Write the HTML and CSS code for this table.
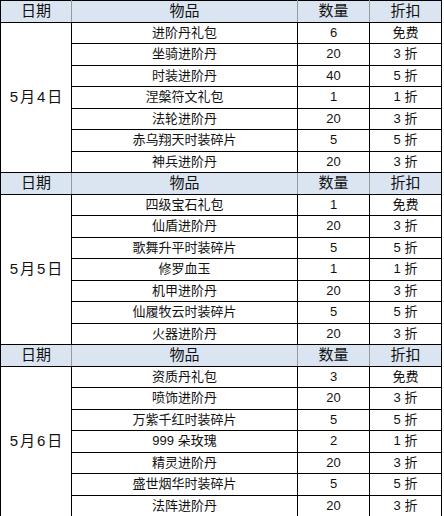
FILE: index.html
```html
<!DOCTYPE html>
<html lang="zh">
<head>
<meta charset="utf-8">
<title>折扣表</title>
<link rel="stylesheet" href="styles.css">
</head>
<body>
<table class="sheet">
  <colgroup>
    <col class="c-date"><col class="c-item"><col class="c-num"><col class="c-off">
  </colgroup>
  <tbody>
    <tr class="head"><th>日期</th><th>物品</th><th>数量</th><th>折扣</th></tr>
    <tr><td class="date" rowspan="7">5月4日</td><td>进阶丹礼包</td><td>6</td><td>免费</td></tr>
    <tr><td>坐骑进阶丹</td><td>20</td><td>3 折</td></tr>
    <tr><td>时装进阶丹</td><td>40</td><td>5 折</td></tr>
    <tr><td>涅槃符文礼包</td><td>1</td><td>1 折</td></tr>
    <tr><td>法轮进阶丹</td><td>20</td><td>3 折</td></tr>
    <tr><td>赤乌翔天时装碎片</td><td>5</td><td>5 折</td></tr>
    <tr><td>神兵进阶丹</td><td>20</td><td>3 折</td></tr>

    <tr class="head"><th>日期</th><th>物品</th><th>数量</th><th>折扣</th></tr>
    <tr><td class="date" rowspan="7">5月5日</td><td>四级宝石礼包</td><td>1</td><td>免费</td></tr>
    <tr><td>仙盾进阶丹</td><td>20</td><td>3 折</td></tr>
    <tr><td>歌舞升平时装碎片</td><td>5</td><td>5 折</td></tr>
    <tr><td>修罗血玉</td><td>1</td><td>1 折</td></tr>
    <tr><td>机甲进阶丹</td><td>20</td><td>3 折</td></tr>
    <tr><td>仙履牧云时装碎片</td><td>5</td><td>5 折</td></tr>
    <tr><td>火器进阶丹</td><td>20</td><td>3 折</td></tr>

    <tr class="head"><th>日期</th><th>物品</th><th>数量</th><th>折扣</th></tr>
    <tr><td class="date" rowspan="7">5月6日</td><td>资质丹礼包</td><td>3</td><td>免费</td></tr>
    <tr><td>喷饰进阶丹</td><td>20</td><td>3 折</td></tr>
    <tr><td>万紫千红时装碎片</td><td>5</td><td>5 折</td></tr>
    <tr><td>999 朵玫瑰</td><td>2</td><td>1 折</td></tr>
    <tr><td>精灵进阶丹</td><td>20</td><td>3 折</td></tr>
    <tr><td>盛世烟华时装碎片</td><td>5</td><td>5 折</td></tr>
    <tr><td>法阵进阶丹</td><td>20</td><td>3 折</td></tr>
  </tbody>
</table>
</body>
</html>
```

FILE: styles.css
```css
html, body {
  margin: 0;
  padding: 0;
  background: #ffffff;
}

.sheet {
  border-collapse: collapse;
  table-layout: fixed;
  width: 442px;
  font-family: "Liberation Sans", "Noto Sans CJK SC", sans-serif;
  color: #111;
}

.c-date { width: 71px; }
.c-item { width: 226px; }
.c-num { width: 72px; }
.c-off { width: 72px; }

.sheet tr {
  height: 21.5px;
}

.sheet td,
.sheet th {
  border: 1px solid #000;
  padding: 0;
  text-align: center;
  vertical-align: middle;
  font-size: 13px;
  line-height: 14px;
  font-weight: normal;
  white-space: nowrap;
}

.sheet .head th {
  background: #dbe5f1;
  font-size: 15px;
  border-left-color: #9a9a9a;
  border-right-color: #9a9a9a;
}

.sheet .head th:first-child {
  border-left-color: #000;
}

.sheet .head th:last-child {
  border-right-color: #000;
}

.sheet .date {
  font-size: 15px;
  letter-spacing: 2px;
  padding-left: 2px;
}
```
